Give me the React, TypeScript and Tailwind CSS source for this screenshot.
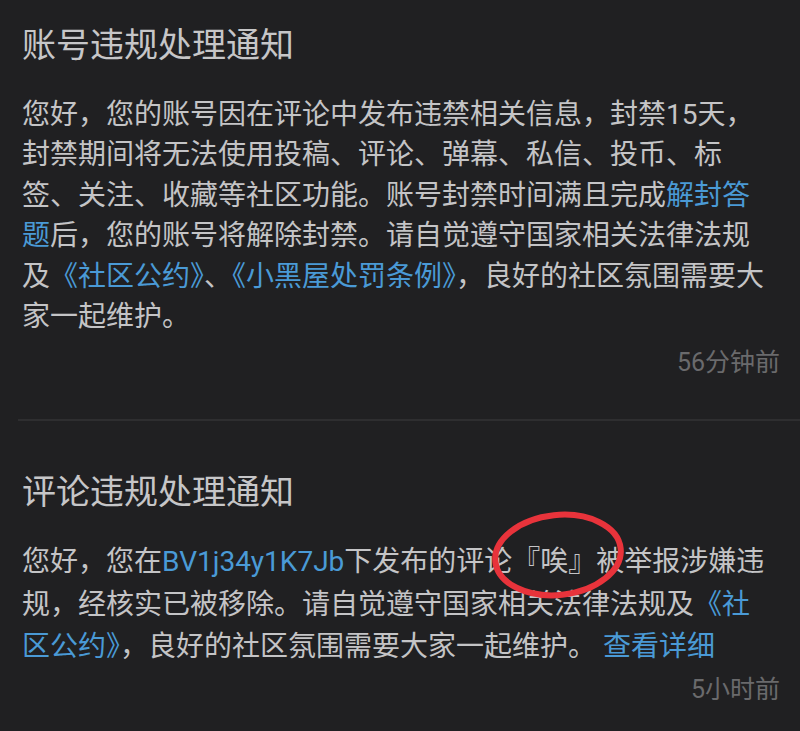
import React from "react";

const Link = ({ children }: { children: React.ReactNode }) => (
  <span className="text-[#4a9ad6]">{children}</span>
);

export default function App() {
  return (
    <div
      className="relative w-[800px] h-[731px] overflow-hidden bg-[#202022] text-[#c4c4c6]"
      style={{ fontFamily: 'Roboto, "Noto Sans CJK SC", sans-serif' }}
    >
      <section className="pl-[22px] pr-[20px] pt-[21px]">
        <h2 className="text-[34px] leading-[48px] text-[#c6c6c8]">账号违规处理通知</h2>
        <p className="mt-[26px] text-[28px] leading-[40.4px] pr-[5px]">
          您好，您的账号因在评论中发布违禁相关信息，封禁15天，封禁期间将无法使用投稿、评论、弹幕、私信、投币、标签、关注、收藏等社区功能。账号封禁时间满且完成
          <Link>解封答题</Link>
          后，您的账号将解除封禁。请自觉遵守国家相关法律法规及
          <Link>《社区公约》</Link>、<Link>《小黑屋处罚条例》</Link>
          ，良好的社区氛围需要大家一起维护。
        </p>
        <div className="mt-[11px] flex justify-end text-[25px] leading-[30px] text-[#6a6a6c]">
          56分钟前
        </div>
      </section>

      <div className="mt-[41px] ml-[18px] h-[2px] bg-[#2e2e30]" />

      <section className="pl-[22px] pr-[20px] pt-[47px]">
        <h2 className="text-[34px] leading-[48px] text-[#c6c6c8]">评论违规处理通知</h2>
        <p className="mt-[25px] text-[28px] leading-[42.5px] pr-[5px]">
          您好，您在<Link>BV1j34y1K7Jb</Link>下发布的评论『唉』被举报涉嫌违规，经核实已被移除。请自觉遵守国家相关法律法规及
          <Link>《社区公约》</Link>，良好的社区氛围需要大家一起维护。 <Link>查看详细</Link>
        </p>
        <div className="mt-[6px] flex justify-end text-[25px] leading-[30px] text-[#6a6a6c]">
          5小时前
        </div>
      </section>

      <svg
        className="absolute left-[485px] top-[505px]"
        width="146"
        height="100"
        viewBox="0 0 146 100"
      >
        <ellipse
          cx="73"
          cy="50"
          rx="63"
          ry="40"
          fill="none"
          stroke="#e8333b"
          strokeWidth="6"
          transform="rotate(-6 73 50)"
        />
      </svg>
    </div>
  );
}
